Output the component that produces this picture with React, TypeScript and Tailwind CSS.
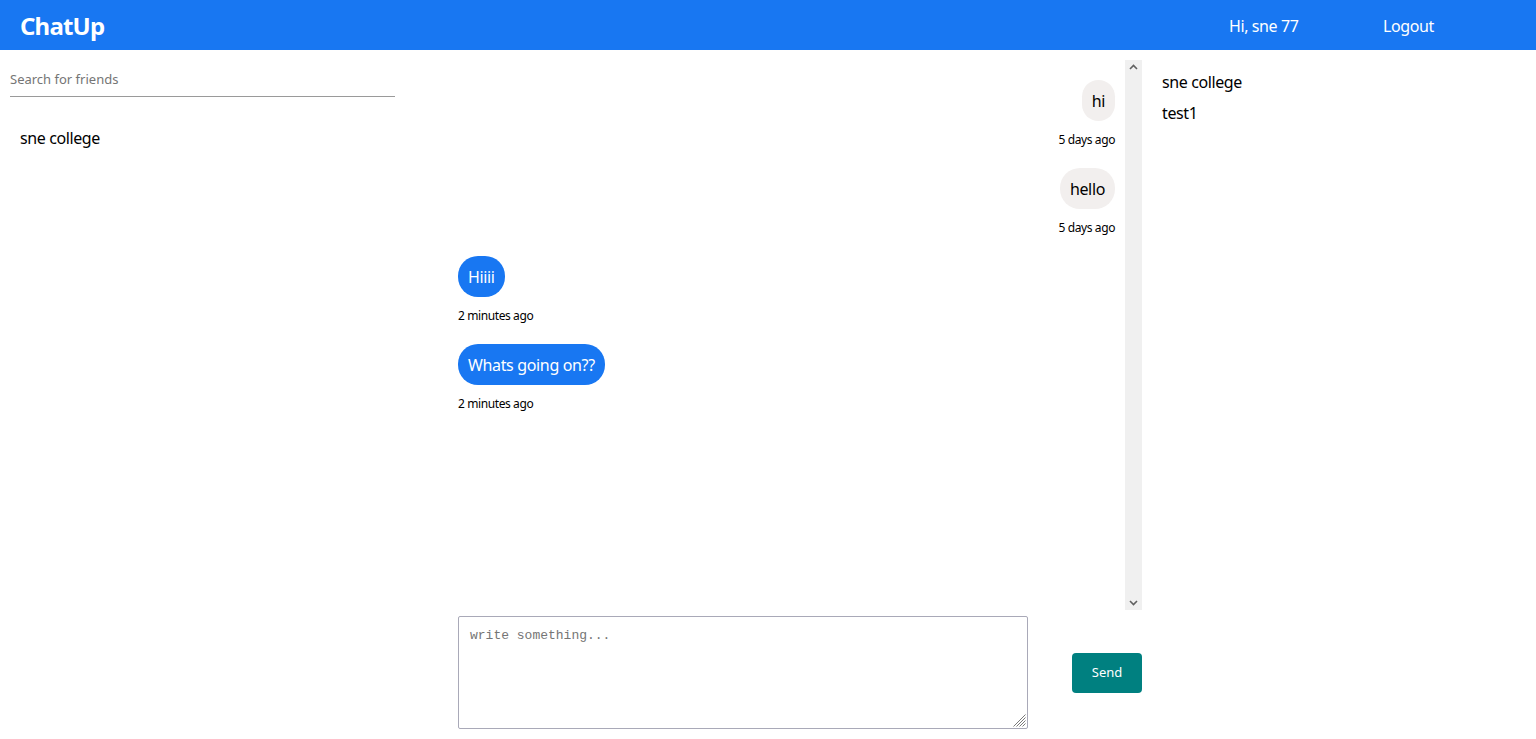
import React from "react";

const F = { fontFamily: '"Noto Sans", "Open Sans", sans-serif' };

type Msg = { text: string; time: string; mine: boolean };

const msgs: Msg[] = [
  { text: "hi", time: "5 days ago", mine: false },
  { text: "hello", time: "5 days ago", mine: false },
  { text: "Hiiii", time: "2 minutes ago", mine: true },
  { text: "Whats going on??", time: "2 minutes ago", mine: true },
];

export default function App() {
  return (
    <div className="w-[1536px] h-[739px] bg-white text-black overflow-hidden" style={F}>
      <header className="h-[50px] bg-[#1877f2] flex items-center pt-[2px] text-white">
        <div className="pl-[20px] text-[24px] font-bold leading-none tracking-[-0.8px]">ChatUp</div>
        <div className="ml-auto flex items-center text-[16px] tracking-[-0.4px]">
          <div className="w-[154px]">Hi, sne 77</div>
          <div className="w-[153px]">Logout</div>
        </div>
      </header>
      <div className="flex">
        <div className="w-[458px] shrink-0">
          <div className="mx-[10px] mt-[13px] w-[385px] h-[34px] border-b border-[#9a9a9a] flex items-center">
            <span className="text-[13px] text-[#757575]">Search for friends</span>
          </div>
          <div className="pl-[20px] mt-[30px] text-[16px] leading-[22px] tracking-[-0.4px]">sne college</div>
        </div>
        <div className="w-[684px] shrink-0">
          <div className="mt-[10px] h-[550px] flex">
            <div className="flex-1 pr-[10px] pt-[20px] flex flex-col">
              {msgs.map((m, i) => (
                <div key={i} className={`flex flex-col mb-[20px] ${m.mine ? "items-start" : "items-end"}`}>
                  <div
                    className={`px-[10px] h-[41px] flex items-center rounded-[20px] text-[16px] tracking-[-0.35px] ${
                      m.mine ? "bg-[#1877f2] text-white" : "bg-[#f2efee] text-black"
                    }`}
                  >
                    {m.text}
                  </div>
                  <div className="mt-[11px] h-[16px] text-[12px] leading-[16px] tracking-[-0.4px]">{m.time}</div>
                </div>
              ))}
            </div>
            <div className="w-[17px] bg-[#f0f0f0] flex flex-col justify-between items-center py-[4px]">
              <svg width="9" height="6" viewBox="0 0 9 6">
                <path d="M1 5 L4.5 1.5 L8 5" stroke="#606060" strokeWidth="1.6" fill="none" />
              </svg>
              <svg width="9" height="6" viewBox="0 0 9 6">
                <path d="M1 1 L4.5 4.5 L8 1" stroke="#606060" strokeWidth="1.6" fill="none" />
              </svg>
            </div>
          </div>
          <div className="mt-[6px] flex items-center justify-between">
            <div className="relative w-[570px] h-[113px] border border-[#a9a9b8] rounded-[2px]">
              <div
                className="pl-[11px] pt-[9px] text-[13px] text-[#757575]"
                style={{ fontFamily: '"Liberation Mono", monospace' }}
              >
                write something...
              </div>
              <svg className="absolute right-[1px] bottom-[1px]" width="14" height="14" viewBox="0 0 14 14">
                <path
                  d="M13.5 1.5 L1.5 13.5 M13.5 4.5 L4.5 13.5 M13.5 7.5 L7.5 13.5 M13.5 10.5 L10.5 13.5"
                  stroke="#7a7a7a"
                  strokeWidth="1"
                />
              </svg>
            </div>
            <div className="w-[70px] h-[40px] rounded-[4px] bg-[#008080] text-white text-[13px] flex items-center justify-center">
              Send
            </div>
          </div>
        </div>
        <div className="pl-[20px] pt-[21px] text-[16px] leading-[22px] tracking-[-0.4px] flex flex-col gap-[9px]">
          <div>sne college</div>
          <div>test1</div>
        </div>
      </div>
    </div>
  );
}
